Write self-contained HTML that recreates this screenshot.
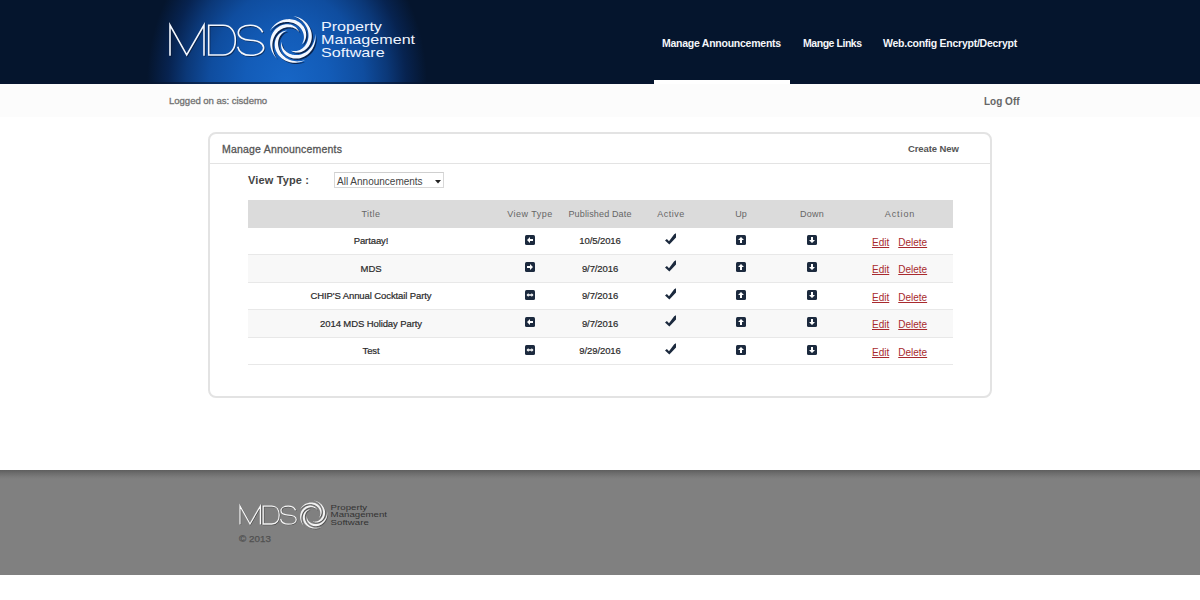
<!DOCTYPE html>
<html><head><meta charset="utf-8">
<style>
*{margin:0;padding:0;box-sizing:border-box}
html,body{width:1200px;height:600px;overflow:hidden;background:#fff;font-family:"Liberation Sans",sans-serif}
.abs{position:absolute}
#hdr{position:absolute;left:0;top:0;width:1200px;height:84px;background:#05152d}
#glow{position:absolute;left:0;top:0;width:1200px;height:84px;
  background:radial-gradient(ellipse 140px 170px at 287px 84px, #1766c6 0%, #135cb8 30%, #0f4d9f 55%, #0b3878 72%, #072350 85%, #05152d 100%)}
.mds{position:absolute;color:#fff}
.pms{transform:scaleX(1.24);transform-origin:0 0;white-space:nowrap}
.nav{position:absolute;top:37px;color:#f4f6fa;font-size:10.5px;font-weight:700;letter-spacing:-0.25px;white-space:nowrap}
#ul{position:absolute;left:654px;top:80px;width:136px;height:4px;background:#fff}
#sub{position:absolute;left:0;top:84px;width:1200px;height:33px;background:#fcfcfc}
#logged{position:absolute;left:169px;top:95px;font-size:9.6px;color:#737373;letter-spacing:-0.05px;-webkit-text-stroke:0.3px #737373;white-space:nowrap}
#logoff{position:absolute;left:984px;top:96px;font-size:10px;font-weight:700;color:#666;white-space:nowrap}
#panel{position:absolute;left:208px;top:132px;width:784px;height:266px;border:2px solid #e3e3e3;border-radius:8px;background:#fff}
#ptitle{position:absolute;left:222px;top:143px;font-size:10.5px;color:#555;white-space:nowrap;letter-spacing:0.2px;-webkit-text-stroke:0.3px #555}
#pcreate{position:absolute;left:908px;top:143px;font-size:9.5px;font-weight:700;color:#555;letter-spacing:-0.1px;white-space:nowrap}
#pdiv{position:absolute;left:210px;top:163px;width:780px;height:1px;background:#e3e3e3}
#vtl{position:absolute;left:248px;top:174px;font-size:11px;font-weight:700;color:#444;letter-spacing:0.15px;white-space:nowrap}
#sel{position:absolute;left:334px;top:172px;width:110px;height:15.5px;border:1px solid #d8d8d8;border-top-color:#cfcfcf;background:#fff}
#selt{position:absolute;left:337px;top:176px;font-size:10px;color:#444;white-space:nowrap}
#tbl{position:absolute;left:248px;top:0;width:705px}
#th{position:absolute;left:248px;top:200px;width:705px;height:28px;background:#dbdbdb}
.hc{position:absolute;top:209px;font-size:9px;color:#666;white-space:nowrap;text-align:center}
.row{position:absolute;left:248px;width:705px}
.rb{position:absolute;left:248px;width:705px;height:1px;background:#e8e8e8}
.cell{position:absolute;top:0;height:100%;display:flex;align-items:center;justify-content:center;font-size:9.5px;color:#2a2a2a;white-space:nowrap;letter-spacing:-0.1px;-webkit-text-stroke:0.2px #2a2a2a;padding-bottom:1px}
.ico{position:absolute;line-height:0}
.cell a{color:#a82a2e;text-decoration:underline;letter-spacing:0;-webkit-text-stroke:0;font-size:10px}
#ftr{position:absolute;left:0;top:470px;width:1200px;height:105px;background:#808080;
  background:linear-gradient(#5e5e5e 0px,#6c6c6c 3px,#7b7b7b 7px,#808080 9px,#808080 100%)}
#copy{position:absolute;left:239px;top:533px;font-size:9.8px;letter-spacing:0.05px;color:#505050;-webkit-text-stroke:0.25px #505050;white-space:nowrap}
</style></head><body>
<div id="hdr"></div><div id="glow"></div><div class="abs" style="left:0;top:82px;width:1200px;height:2px;background:rgba(6,22,48,0.6)"></div>
<div class="abs" style="left:160px;top:10px;width:270px;height:62px;transform:scale(1);transform-origin:0 0">
<svg class="abs" style="left:0;top:0" width="140" height="60" viewBox="160 10 140 60">
<g fill="none" stroke="#06122a" stroke-opacity="0.6" stroke-width="1.7000000000000002" transform="translate(0.8,0.8)"><path d="M170,55.7 L170,25 L186.7,55 L204,25 L204,55.7"/>
<path d="M208.7,25.3 L223,25.3 C231,25.3 235.3,31.5 235.3,40.15 C235.3,48.8 231,55 223,55 L208.7,55 Z"/>
<path d="M262.7,32.3 C260.5,27.5 256,25.3 250.3,25.3 C243,25.3 238.3,28.5 238.3,32.7 C238.3,37 243,40 250.3,40.2 C258.5,40.4 263.7,43.5 263.7,47.8 C263.7,52 258.5,55.3 250.5,55.3 C243.5,55.3 239,52 237.7,46.7"/></g>
<g fill="none" stroke="#f4f8ff" stroke-width="1.6"><path d="M170,55.7 L170,25 L186.7,55 L204,25 L204,55.7"/>
<path d="M208.7,25.3 L223,25.3 C231,25.3 235.3,31.5 235.3,40.15 C235.3,48.8 231,55 223,55 L208.7,55 Z"/>
<path d="M262.7,32.3 C260.5,27.5 256,25.3 250.3,25.3 C243,25.3 238.3,28.5 238.3,32.7 C238.3,37 243,40 250.3,40.2 C258.5,40.4 263.7,43.5 263.7,47.8 C263.7,52 258.5,55.3 250.5,55.3 C243.5,55.3 239,52 237.7,46.7"/></g></svg>
<div class="abs" style="left:107px;top:5px;line-height:0"><svg width="50" height="50" viewBox="0 0 100 100"><g fill="#081a3c" opacity="0.85" transform="translate(2.6,2.6)"><path d="M5.19,32.80 L6.74,29.96 L8.47,27.26 L10.38,24.70 L12.43,22.29 L14.64,20.04 L16.98,17.97 L19.44,16.08 L22.01,14.38 L24.67,12.88 L27.41,11.58 L30.21,10.49 L33.06,9.61 L35.95,8.94 L38.85,8.49 L41.74,8.25 L44.62,8.23 L47.47,8.41 L50.27,8.80 L53.00,9.39 L55.66,10.17 L58.22,11.14 L60.67,12.29 L63.00,13.60 L65.19,15.06 L67.24,16.67 L69.14,18.40 L70.88,20.25 L72.44,22.20 L73.83,24.24 L75.04,26.34 L76.07,28.50 L76.91,30.69 L77.56,32.90 L78.03,35.12 L78.31,37.33 L78.42,39.51 L78.36,41.66 L78.13,43.74 L77.74,45.76 L77.20,47.70 L76.53,49.55 L75.72,51.29 L74.80,52.93 L73.77,54.44 L72.65,55.83 L71.45,57.09 L70.19,58.22 L68.87,59.21 L68.87,59.21 L69.75,58.04 L70.56,56.80 L71.29,55.48 L71.94,54.10 L72.50,52.65 L72.97,51.15 L73.34,49.60 L73.62,48.00 L73.79,46.37 L73.85,44.69 L73.80,43.00 L73.65,41.28 L73.37,39.54 L72.98,37.80 L72.47,36.06 L71.84,34.33 L71.09,32.61 L70.21,30.91 L69.20,29.24 L68.07,27.61 L66.82,26.03 L65.44,24.51 L63.94,23.05 L62.32,21.66 L60.58,20.36 L58.72,19.15 L56.75,18.05 L54.68,17.06 L52.50,16.19 L50.23,15.45 L47.86,14.86 L45.42,14.41 L42.90,14.13 L40.33,14.01 L37.70,14.07 L35.03,14.31 L32.34,14.74 L29.63,15.36 L26.92,16.19 L24.23,17.21 L21.57,18.45 L18.96,19.89 L16.40,21.54 L13.93,23.39 L11.56,25.45 L9.30,27.71 L7.17,30.16 L5.19,32.80Z"/><path d="M52.51,2.07 L55.69,2.67 L58.80,3.48 L61.82,4.50 L64.75,5.71 L67.56,7.11 L70.26,8.70 L72.81,10.45 L75.22,12.37 L77.47,14.44 L79.55,16.64 L81.46,18.97 L83.18,21.41 L84.70,23.95 L86.03,26.56 L87.15,29.25 L88.07,31.98 L88.77,34.74 L89.27,37.52 L89.55,40.31 L89.63,43.07 L89.50,45.81 L89.17,48.49 L88.64,51.11 L87.92,53.65 L87.03,56.10 L85.97,58.44 L84.74,60.66 L83.37,62.76 L81.87,64.71 L80.24,66.50 L78.51,68.15 L76.68,69.62 L74.78,70.93 L72.81,72.06 L70.80,73.01 L68.76,73.79 L66.70,74.39 L64.64,74.82 L62.60,75.07 L60.59,75.16 L58.63,75.09 L56.72,74.86 L54.88,74.49 L53.12,73.98 L51.45,73.34 L49.88,72.59 L48.42,71.74 L47.08,70.80 L47.08,70.80 L48.46,71.27 L49.89,71.65 L51.37,71.94 L52.88,72.13 L54.43,72.22 L56.00,72.20 L57.59,72.08 L59.20,71.84 L60.81,71.50 L62.42,71.04 L64.02,70.48 L65.60,69.79 L67.17,69.00 L68.70,68.09 L70.20,67.06 L71.66,65.93 L73.06,64.68 L74.40,63.32 L75.68,61.85 L76.88,60.27 L77.99,58.59 L79.02,56.81 L79.94,54.93 L80.76,52.96 L81.46,50.90 L82.03,48.76 L82.47,46.55 L82.78,44.27 L82.93,41.93 L82.93,39.54 L82.76,37.11 L82.43,34.65 L81.93,32.17 L81.24,29.68 L80.37,27.20 L79.32,24.74 L78.08,22.31 L76.65,19.92 L75.03,17.60 L73.22,15.36 L71.22,13.21 L69.04,11.17 L66.69,9.25 L64.16,7.48 L61.47,5.86 L58.62,4.40 L55.63,3.14 L52.51,2.07Z"/><path d="M96.36,37.58 L96.77,40.78 L96.96,43.99 L96.93,47.18 L96.68,50.34 L96.22,53.45 L95.54,56.50 L94.66,59.48 L93.58,62.36 L92.31,65.14 L90.86,67.80 L89.23,70.33 L87.44,72.72 L85.50,74.95 L83.42,77.02 L81.22,78.92 L78.90,80.64 L76.49,82.16 L74.00,83.49 L71.44,84.62 L68.83,85.55 L66.19,86.27 L63.54,86.78 L60.88,87.09 L58.25,87.20 L55.64,87.10 L53.09,86.82 L50.59,86.34 L48.18,85.68 L45.86,84.85 L43.65,83.86 L41.55,82.72 L39.58,81.44 L37.75,80.03 L36.07,78.51 L34.54,76.89 L33.17,75.19 L31.96,73.42 L30.92,71.60 L30.05,69.73 L29.34,67.85 L28.81,65.96 L28.43,64.07 L28.22,62.21 L28.16,60.38 L28.25,58.60 L28.48,56.87 L28.84,55.22 L29.32,53.65 L29.32,53.65 L29.29,55.11 L29.37,56.59 L29.55,58.08 L29.84,59.58 L30.24,61.08 L30.74,62.57 L31.35,64.04 L32.07,65.50 L32.89,66.92 L33.82,68.31 L34.86,69.66 L36.00,70.96 L37.24,72.20 L38.58,73.38 L40.01,74.49 L41.54,75.52 L43.17,76.47 L44.87,77.32 L46.67,78.08 L48.54,78.74 L50.48,79.28 L52.49,79.70 L54.56,80.00 L56.69,80.17 L58.86,80.20 L61.07,80.08 L63.32,79.82 L65.58,79.40 L67.85,78.82 L70.12,78.08 L72.39,77.18 L74.62,76.10 L76.83,74.85 L78.98,73.43 L81.07,71.84 L83.09,70.08 L85.02,68.15 L86.84,66.05 L88.54,63.79 L90.12,61.38 L91.55,58.81 L92.81,56.11 L93.91,53.28 L94.82,50.33 L95.53,47.27 L96.03,44.11 L96.31,40.88 L96.36,37.58Z"/><path d="M76.14,90.26 L73.22,91.64 L70.23,92.81 L67.18,93.76 L64.10,94.50 L61.00,95.02 L57.89,95.32 L54.79,95.40 L51.71,95.27 L48.68,94.92 L45.70,94.36 L42.79,93.59 L39.96,92.63 L37.24,91.47 L34.63,90.14 L32.14,88.63 L29.80,86.96 L27.60,85.13 L25.57,83.17 L23.70,81.09 L22.01,78.90 L20.51,76.61 L19.20,74.24 L18.09,71.81 L17.17,69.34 L16.46,66.83 L15.94,64.31 L15.62,61.79 L15.50,59.30 L15.58,56.83 L15.83,54.42 L16.27,52.08 L16.88,49.81 L17.66,47.63 L18.58,45.56 L19.65,43.61 L20.84,41.78 L22.15,40.08 L23.57,38.53 L25.07,37.12 L26.64,35.87 L28.27,34.78 L29.95,33.84 L31.66,33.06 L33.38,32.43 L35.10,31.97 L36.81,31.65 L38.50,31.48 L40.14,31.46 L40.14,31.46 L38.74,31.88 L37.36,32.42 L36.00,33.05 L34.66,33.79 L33.36,34.63 L32.10,35.57 L30.88,36.60 L29.72,37.73 L28.62,38.96 L27.59,40.27 L26.62,41.67 L25.74,43.16 L24.94,44.72 L24.24,46.36 L23.63,48.07 L23.12,49.84 L22.72,51.68 L22.43,53.57 L22.26,55.51 L22.22,57.49 L22.30,59.50 L22.52,61.55 L22.88,63.61 L23.38,65.68 L24.02,67.76 L24.81,69.83 L25.76,71.88 L26.85,73.90 L28.10,75.88 L29.51,77.82 L31.07,79.69 L32.79,81.48 L34.65,83.19 L36.67,84.80 L38.83,86.30 L41.13,87.67 L43.56,88.91 L46.12,90.00 L48.79,90.92 L51.58,91.67 L54.45,92.24 L57.42,92.61 L60.45,92.77 L63.54,92.72 L66.67,92.45 L69.83,91.96 L72.99,91.23 L76.14,90.26Z"/><path d="M19.79,87.30 L17.58,84.95 L15.54,82.46 L13.69,79.87 L12.04,77.16 L10.58,74.37 L9.34,71.51 L8.30,68.58 L7.48,65.62 L6.87,62.62 L6.48,59.61 L6.31,56.61 L6.35,53.63 L6.61,50.68 L7.08,47.78 L7.74,44.95 L8.61,42.20 L9.66,39.55 L10.90,37.01 L12.31,34.59 L13.87,32.31 L15.58,30.18 L17.43,28.20 L19.39,26.39 L21.46,24.75 L23.63,23.30 L25.86,22.03 L28.16,20.95 L30.50,20.06 L32.86,19.37 L35.24,18.87 L37.60,18.56 L39.95,18.44 L42.26,18.51 L44.51,18.75 L46.70,19.16 L48.81,19.73 L50.83,20.45 L52.74,21.31 L54.54,22.31 L56.22,23.42 L57.77,24.63 L59.18,25.94 L60.45,27.32 L61.57,28.77 L62.55,30.26 L63.37,31.79 L64.05,33.34 L64.59,34.89 L64.59,34.89 L63.75,33.70 L62.82,32.55 L61.79,31.45 L60.68,30.40 L59.48,29.42 L58.19,28.51 L56.83,27.68 L55.40,26.92 L53.89,26.25 L52.32,25.68 L50.69,25.20 L49.01,24.82 L47.28,24.54 L45.50,24.37 L43.69,24.32 L41.84,24.39 L39.97,24.57 L38.09,24.88 L36.19,25.32 L34.29,25.89 L32.40,26.60 L30.53,27.43 L28.68,28.41 L26.86,29.53 L25.08,30.78 L23.36,32.17 L21.70,33.70 L20.12,35.37 L18.62,37.17 L17.21,39.11 L15.92,41.17 L14.74,43.36 L13.69,45.66 L12.78,48.08 L12.02,50.59 L11.43,53.21 L11.01,55.90 L10.76,58.67 L10.71,61.50 L10.86,64.38 L11.21,67.29 L11.77,70.22 L12.55,73.16 L13.55,76.08 L14.77,78.97 L16.22,81.82 L17.90,84.60 L19.79,87.30Z"/></g><g fill="#f4f8ff"><path d="M5.19,32.80 L6.74,29.96 L8.47,27.26 L10.38,24.70 L12.43,22.29 L14.64,20.04 L16.98,17.97 L19.44,16.08 L22.01,14.38 L24.67,12.88 L27.41,11.58 L30.21,10.49 L33.06,9.61 L35.95,8.94 L38.85,8.49 L41.74,8.25 L44.62,8.23 L47.47,8.41 L50.27,8.80 L53.00,9.39 L55.66,10.17 L58.22,11.14 L60.67,12.29 L63.00,13.60 L65.19,15.06 L67.24,16.67 L69.14,18.40 L70.88,20.25 L72.44,22.20 L73.83,24.24 L75.04,26.34 L76.07,28.50 L76.91,30.69 L77.56,32.90 L78.03,35.12 L78.31,37.33 L78.42,39.51 L78.36,41.66 L78.13,43.74 L77.74,45.76 L77.20,47.70 L76.53,49.55 L75.72,51.29 L74.80,52.93 L73.77,54.44 L72.65,55.83 L71.45,57.09 L70.19,58.22 L68.87,59.21 L68.87,59.21 L69.75,58.04 L70.56,56.80 L71.29,55.48 L71.94,54.10 L72.50,52.65 L72.97,51.15 L73.34,49.60 L73.62,48.00 L73.79,46.37 L73.85,44.69 L73.80,43.00 L73.65,41.28 L73.37,39.54 L72.98,37.80 L72.47,36.06 L71.84,34.33 L71.09,32.61 L70.21,30.91 L69.20,29.24 L68.07,27.61 L66.82,26.03 L65.44,24.51 L63.94,23.05 L62.32,21.66 L60.58,20.36 L58.72,19.15 L56.75,18.05 L54.68,17.06 L52.50,16.19 L50.23,15.45 L47.86,14.86 L45.42,14.41 L42.90,14.13 L40.33,14.01 L37.70,14.07 L35.03,14.31 L32.34,14.74 L29.63,15.36 L26.92,16.19 L24.23,17.21 L21.57,18.45 L18.96,19.89 L16.40,21.54 L13.93,23.39 L11.56,25.45 L9.30,27.71 L7.17,30.16 L5.19,32.80Z"/><path d="M52.51,2.07 L55.69,2.67 L58.80,3.48 L61.82,4.50 L64.75,5.71 L67.56,7.11 L70.26,8.70 L72.81,10.45 L75.22,12.37 L77.47,14.44 L79.55,16.64 L81.46,18.97 L83.18,21.41 L84.70,23.95 L86.03,26.56 L87.15,29.25 L88.07,31.98 L88.77,34.74 L89.27,37.52 L89.55,40.31 L89.63,43.07 L89.50,45.81 L89.17,48.49 L88.64,51.11 L87.92,53.65 L87.03,56.10 L85.97,58.44 L84.74,60.66 L83.37,62.76 L81.87,64.71 L80.24,66.50 L78.51,68.15 L76.68,69.62 L74.78,70.93 L72.81,72.06 L70.80,73.01 L68.76,73.79 L66.70,74.39 L64.64,74.82 L62.60,75.07 L60.59,75.16 L58.63,75.09 L56.72,74.86 L54.88,74.49 L53.12,73.98 L51.45,73.34 L49.88,72.59 L48.42,71.74 L47.08,70.80 L47.08,70.80 L48.46,71.27 L49.89,71.65 L51.37,71.94 L52.88,72.13 L54.43,72.22 L56.00,72.20 L57.59,72.08 L59.20,71.84 L60.81,71.50 L62.42,71.04 L64.02,70.48 L65.60,69.79 L67.17,69.00 L68.70,68.09 L70.20,67.06 L71.66,65.93 L73.06,64.68 L74.40,63.32 L75.68,61.85 L76.88,60.27 L77.99,58.59 L79.02,56.81 L79.94,54.93 L80.76,52.96 L81.46,50.90 L82.03,48.76 L82.47,46.55 L82.78,44.27 L82.93,41.93 L82.93,39.54 L82.76,37.11 L82.43,34.65 L81.93,32.17 L81.24,29.68 L80.37,27.20 L79.32,24.74 L78.08,22.31 L76.65,19.92 L75.03,17.60 L73.22,15.36 L71.22,13.21 L69.04,11.17 L66.69,9.25 L64.16,7.48 L61.47,5.86 L58.62,4.40 L55.63,3.14 L52.51,2.07Z"/><path d="M96.36,37.58 L96.77,40.78 L96.96,43.99 L96.93,47.18 L96.68,50.34 L96.22,53.45 L95.54,56.50 L94.66,59.48 L93.58,62.36 L92.31,65.14 L90.86,67.80 L89.23,70.33 L87.44,72.72 L85.50,74.95 L83.42,77.02 L81.22,78.92 L78.90,80.64 L76.49,82.16 L74.00,83.49 L71.44,84.62 L68.83,85.55 L66.19,86.27 L63.54,86.78 L60.88,87.09 L58.25,87.20 L55.64,87.10 L53.09,86.82 L50.59,86.34 L48.18,85.68 L45.86,84.85 L43.65,83.86 L41.55,82.72 L39.58,81.44 L37.75,80.03 L36.07,78.51 L34.54,76.89 L33.17,75.19 L31.96,73.42 L30.92,71.60 L30.05,69.73 L29.34,67.85 L28.81,65.96 L28.43,64.07 L28.22,62.21 L28.16,60.38 L28.25,58.60 L28.48,56.87 L28.84,55.22 L29.32,53.65 L29.32,53.65 L29.29,55.11 L29.37,56.59 L29.55,58.08 L29.84,59.58 L30.24,61.08 L30.74,62.57 L31.35,64.04 L32.07,65.50 L32.89,66.92 L33.82,68.31 L34.86,69.66 L36.00,70.96 L37.24,72.20 L38.58,73.38 L40.01,74.49 L41.54,75.52 L43.17,76.47 L44.87,77.32 L46.67,78.08 L48.54,78.74 L50.48,79.28 L52.49,79.70 L54.56,80.00 L56.69,80.17 L58.86,80.20 L61.07,80.08 L63.32,79.82 L65.58,79.40 L67.85,78.82 L70.12,78.08 L72.39,77.18 L74.62,76.10 L76.83,74.85 L78.98,73.43 L81.07,71.84 L83.09,70.08 L85.02,68.15 L86.84,66.05 L88.54,63.79 L90.12,61.38 L91.55,58.81 L92.81,56.11 L93.91,53.28 L94.82,50.33 L95.53,47.27 L96.03,44.11 L96.31,40.88 L96.36,37.58Z"/><path d="M76.14,90.26 L73.22,91.64 L70.23,92.81 L67.18,93.76 L64.10,94.50 L61.00,95.02 L57.89,95.32 L54.79,95.40 L51.71,95.27 L48.68,94.92 L45.70,94.36 L42.79,93.59 L39.96,92.63 L37.24,91.47 L34.63,90.14 L32.14,88.63 L29.80,86.96 L27.60,85.13 L25.57,83.17 L23.70,81.09 L22.01,78.90 L20.51,76.61 L19.20,74.24 L18.09,71.81 L17.17,69.34 L16.46,66.83 L15.94,64.31 L15.62,61.79 L15.50,59.30 L15.58,56.83 L15.83,54.42 L16.27,52.08 L16.88,49.81 L17.66,47.63 L18.58,45.56 L19.65,43.61 L20.84,41.78 L22.15,40.08 L23.57,38.53 L25.07,37.12 L26.64,35.87 L28.27,34.78 L29.95,33.84 L31.66,33.06 L33.38,32.43 L35.10,31.97 L36.81,31.65 L38.50,31.48 L40.14,31.46 L40.14,31.46 L38.74,31.88 L37.36,32.42 L36.00,33.05 L34.66,33.79 L33.36,34.63 L32.10,35.57 L30.88,36.60 L29.72,37.73 L28.62,38.96 L27.59,40.27 L26.62,41.67 L25.74,43.16 L24.94,44.72 L24.24,46.36 L23.63,48.07 L23.12,49.84 L22.72,51.68 L22.43,53.57 L22.26,55.51 L22.22,57.49 L22.30,59.50 L22.52,61.55 L22.88,63.61 L23.38,65.68 L24.02,67.76 L24.81,69.83 L25.76,71.88 L26.85,73.90 L28.10,75.88 L29.51,77.82 L31.07,79.69 L32.79,81.48 L34.65,83.19 L36.67,84.80 L38.83,86.30 L41.13,87.67 L43.56,88.91 L46.12,90.00 L48.79,90.92 L51.58,91.67 L54.45,92.24 L57.42,92.61 L60.45,92.77 L63.54,92.72 L66.67,92.45 L69.83,91.96 L72.99,91.23 L76.14,90.26Z"/><path d="M19.79,87.30 L17.58,84.95 L15.54,82.46 L13.69,79.87 L12.04,77.16 L10.58,74.37 L9.34,71.51 L8.30,68.58 L7.48,65.62 L6.87,62.62 L6.48,59.61 L6.31,56.61 L6.35,53.63 L6.61,50.68 L7.08,47.78 L7.74,44.95 L8.61,42.20 L9.66,39.55 L10.90,37.01 L12.31,34.59 L13.87,32.31 L15.58,30.18 L17.43,28.20 L19.39,26.39 L21.46,24.75 L23.63,23.30 L25.86,22.03 L28.16,20.95 L30.50,20.06 L32.86,19.37 L35.24,18.87 L37.60,18.56 L39.95,18.44 L42.26,18.51 L44.51,18.75 L46.70,19.16 L48.81,19.73 L50.83,20.45 L52.74,21.31 L54.54,22.31 L56.22,23.42 L57.77,24.63 L59.18,25.94 L60.45,27.32 L61.57,28.77 L62.55,30.26 L63.37,31.79 L64.05,33.34 L64.59,34.89 L64.59,34.89 L63.75,33.70 L62.82,32.55 L61.79,31.45 L60.68,30.40 L59.48,29.42 L58.19,28.51 L56.83,27.68 L55.40,26.92 L53.89,26.25 L52.32,25.68 L50.69,25.20 L49.01,24.82 L47.28,24.54 L45.50,24.37 L43.69,24.32 L41.84,24.39 L39.97,24.57 L38.09,24.88 L36.19,25.32 L34.29,25.89 L32.40,26.60 L30.53,27.43 L28.68,28.41 L26.86,29.53 L25.08,30.78 L23.36,32.17 L21.70,33.70 L20.12,35.37 L18.62,37.17 L17.21,39.11 L15.92,41.17 L14.74,43.36 L13.69,45.66 L12.78,48.08 L12.02,50.59 L11.43,53.21 L11.01,55.90 L10.76,58.67 L10.71,61.50 L10.86,64.38 L11.21,67.29 L11.77,70.22 L12.55,73.16 L13.55,76.08 L14.77,78.97 L16.22,81.82 L17.90,84.60 L19.79,87.30Z"/></g></svg></div>
<div class="abs pms" style="left:161px;top:10px;color:#eef4ff;font-size:13px;line-height:13px;text-shadow:none">Property<br>Management<br>Software</div>
</div>
<div class="nav" style="left:662px">Manage Announcements</div>
<div class="nav" style="left:803px;letter-spacing:-0.45px">Mange Links</div>
<div class="nav" style="left:883px">Web.config Encrypt/Decrypt</div>
<div id="ul"></div>
<div id="sub"></div>
<div id="logged">Logged on as: cisdemo</div>
<div id="logoff">Log Off</div>

<div id="panel"></div>
<div id="ptitle">Manage Announcements</div>
<div id="pcreate">Create New</div>
<div id="pdiv"></div>
<div id="vtl">View Type :</div>
<div id="sel"></div>
<div id="selt">All Announcements</div>
<svg class="abs" style="left:434.5px;top:179.5px" width="6" height="4"><path d="M0,0 L6,0 L3,3.4 Z" fill="#222"/></svg>

<div id="th"></div>
<div class="hc" style="left:248px;width:246px;letter-spacing:0.5px">Title</div>
<div class="hc" style="left:500px;width:60px;letter-spacing:0.5px">View Type</div>
<div class="hc" style="left:560px;width:80px;letter-spacing:0.15px">Published Date</div>
<div class="hc" style="left:641px;width:60px;letter-spacing:0.5px">Active</div>
<div class="hc" style="left:711px;width:60px">Up</div>
<div class="hc" style="left:782px;width:60px;letter-spacing:0.3px">Down</div>
<div class="hc" style="left:870px;width:60px;letter-spacing:0.9px">Action</div>
<div class="row" style="top:228px;height:26px;background:#fff">
  <div class="cell t" style="left:0;width:246px">Partaay!</div>
  <div class="ico" style="left:277px;top:7px"><svg width="10" height="10" viewBox="0 0 10 10"><rect x="0" y="0" width="10" height="10" rx="1.5" fill="#1c2a3e"/><path d="M2,5 L5,2 L5,4 L8,4 L8,6 L5,6 L5,8 Z" fill="#fff"/></svg></div>
  <div class="cell d" style="left:310px;width:84px">10/5/2016</div>
  <div class="ico" style="left:416px;top:4px"><svg width="14" height="14" viewBox="0 0 14 14"><path d="M1,8.4 L2.9,7 L5,9.3 L10.2,2.2 L12,1.2 L12,5.4 L5.4,12.4 Z" fill="#1c2a3e"/></svg></div>
  <div class="ico" style="left:488px;top:7px"><svg width="10" height="10" viewBox="0 0 10 10"><rect width="10" height="10" rx="1.5" fill="#1c2a3e"/><path d="M5,2 L8,5 L6,5 L6,8 L4,8 L4,5 L2,5 Z" fill="#fff"/></svg></div>
  <div class="ico" style="left:559px;top:7px"><svg width="10" height="10" viewBox="0 0 10 10"><rect width="10" height="10" rx="1.5" fill="#1c2a3e"/><path d="M5,8 L8,5 L6,5 L6,2 L4,2 L4,5 L2,5 Z" fill="#fff"/></svg></div>
  <div class="cell a" style="left:624px;padding-bottom:0;top:1px"><a>Edit</a><a style="margin-left:9px">Delete</a></div>
</div>
<div class="rb" style="top:254px"></div>
<div class="row" style="top:255px;height:27px;background:#f8f8f8">
  <div class="cell t" style="left:0;width:246px">MDS</div>
  <div class="ico" style="left:277px;top:7px"><svg width="10" height="10" viewBox="0 0 10 10"><rect x="0" y="0" width="10" height="10" rx="1.5" fill="#1c2a3e"/><path d="M8,5 L5,2 L5,4 L2,4 L2,6 L5,6 L5,8 Z" fill="#fff"/></svg></div>
  <div class="cell d" style="left:310px;width:84px">9/7/2016</div>
  <div class="ico" style="left:416px;top:4px"><svg width="14" height="14" viewBox="0 0 14 14"><path d="M1,8.4 L2.9,7 L5,9.3 L10.2,2.2 L12,1.2 L12,5.4 L5.4,12.4 Z" fill="#1c2a3e"/></svg></div>
  <div class="ico" style="left:488px;top:7px"><svg width="10" height="10" viewBox="0 0 10 10"><rect width="10" height="10" rx="1.5" fill="#1c2a3e"/><path d="M5,2 L8,5 L6,5 L6,8 L4,8 L4,5 L2,5 Z" fill="#fff"/></svg></div>
  <div class="ico" style="left:559px;top:7px"><svg width="10" height="10" viewBox="0 0 10 10"><rect width="10" height="10" rx="1.5" fill="#1c2a3e"/><path d="M5,8 L8,5 L6,5 L6,2 L4,2 L4,5 L2,5 Z" fill="#fff"/></svg></div>
  <div class="cell a" style="left:624px;padding-bottom:0;top:1px"><a>Edit</a><a style="margin-left:9px">Delete</a></div>
</div>
<div class="rb" style="top:282px"></div>
<div class="row" style="top:283px;height:26px;background:#fff">
  <div class="cell t" style="left:0;width:246px">CHIP'S Annual Cocktail Party</div>
  <div class="ico" style="left:277px;top:7px"><svg width="10" height="10" viewBox="0 0 10 10"><rect x="0" y="0" width="10" height="10" rx="1.5" fill="#1c2a3e"/><path d="M1.5,5 L3.5,3 L3.5,4.2 L6.5,4.2 L6.5,3 L8.5,5 L6.5,7 L6.5,5.8 L3.5,5.8 L3.5,7 Z" fill="#fff"/></svg></div>
  <div class="cell d" style="left:310px;width:84px">9/7/2016</div>
  <div class="ico" style="left:416px;top:4px"><svg width="14" height="14" viewBox="0 0 14 14"><path d="M1,8.4 L2.9,7 L5,9.3 L10.2,2.2 L12,1.2 L12,5.4 L5.4,12.4 Z" fill="#1c2a3e"/></svg></div>
  <div class="ico" style="left:488px;top:7px"><svg width="10" height="10" viewBox="0 0 10 10"><rect width="10" height="10" rx="1.5" fill="#1c2a3e"/><path d="M5,2 L8,5 L6,5 L6,8 L4,8 L4,5 L2,5 Z" fill="#fff"/></svg></div>
  <div class="ico" style="left:559px;top:7px"><svg width="10" height="10" viewBox="0 0 10 10"><rect width="10" height="10" rx="1.5" fill="#1c2a3e"/><path d="M5,8 L8,5 L6,5 L6,2 L4,2 L4,5 L2,5 Z" fill="#fff"/></svg></div>
  <div class="cell a" style="left:624px;padding-bottom:0;top:1px"><a>Edit</a><a style="margin-left:9px">Delete</a></div>
</div>
<div class="rb" style="top:309px"></div>
<div class="row" style="top:310px;height:27px;background:#f8f8f8">
  <div class="cell t" style="left:0;width:246px">2014 MDS Holiday Party</div>
  <div class="ico" style="left:277px;top:7px"><svg width="10" height="10" viewBox="0 0 10 10"><rect x="0" y="0" width="10" height="10" rx="1.5" fill="#1c2a3e"/><path d="M2,5 L5,2 L5,4 L8,4 L8,6 L5,6 L5,8 Z" fill="#fff"/></svg></div>
  <div class="cell d" style="left:310px;width:84px">9/7/2016</div>
  <div class="ico" style="left:416px;top:4px"><svg width="14" height="14" viewBox="0 0 14 14"><path d="M1,8.4 L2.9,7 L5,9.3 L10.2,2.2 L12,1.2 L12,5.4 L5.4,12.4 Z" fill="#1c2a3e"/></svg></div>
  <div class="ico" style="left:488px;top:7px"><svg width="10" height="10" viewBox="0 0 10 10"><rect width="10" height="10" rx="1.5" fill="#1c2a3e"/><path d="M5,2 L8,5 L6,5 L6,8 L4,8 L4,5 L2,5 Z" fill="#fff"/></svg></div>
  <div class="ico" style="left:559px;top:7px"><svg width="10" height="10" viewBox="0 0 10 10"><rect width="10" height="10" rx="1.5" fill="#1c2a3e"/><path d="M5,8 L8,5 L6,5 L6,2 L4,2 L4,5 L2,5 Z" fill="#fff"/></svg></div>
  <div class="cell a" style="left:624px;padding-bottom:0;top:1px"><a>Edit</a><a style="margin-left:9px">Delete</a></div>
</div>
<div class="rb" style="top:337px"></div>
<div class="row" style="top:338px;height:26px;background:#fff">
  <div class="cell t" style="left:0;width:246px">Test</div>
  <div class="ico" style="left:277px;top:7px"><svg width="10" height="10" viewBox="0 0 10 10"><rect x="0" y="0" width="10" height="10" rx="1.5" fill="#1c2a3e"/><path d="M1.5,5 L3.5,3 L3.5,4.2 L6.5,4.2 L6.5,3 L8.5,5 L6.5,7 L6.5,5.8 L3.5,5.8 L3.5,7 Z" fill="#fff"/></svg></div>
  <div class="cell d" style="left:310px;width:84px">9/29/2016</div>
  <div class="ico" style="left:416px;top:4px"><svg width="14" height="14" viewBox="0 0 14 14"><path d="M1,8.4 L2.9,7 L5,9.3 L10.2,2.2 L12,1.2 L12,5.4 L5.4,12.4 Z" fill="#1c2a3e"/></svg></div>
  <div class="ico" style="left:488px;top:7px"><svg width="10" height="10" viewBox="0 0 10 10"><rect width="10" height="10" rx="1.5" fill="#1c2a3e"/><path d="M5,2 L8,5 L6,5 L6,8 L4,8 L4,5 L2,5 Z" fill="#fff"/></svg></div>
  <div class="ico" style="left:559px;top:7px"><svg width="10" height="10" viewBox="0 0 10 10"><rect width="10" height="10" rx="1.5" fill="#1c2a3e"/><path d="M5,8 L8,5 L6,5 L6,2 L4,2 L4,5 L2,5 Z" fill="#fff"/></svg></div>
  <div class="cell a" style="left:624px;padding-bottom:0;top:1px"><a>Edit</a><a style="margin-left:9px">Delete</a></div>
</div>
<div class="rb" style="top:364px"></div>


<div id="ftr"></div>
<div class="abs" style="left:233.7px;top:496.8px;width:270px;height:62px;transform:scale(0.6);transform-origin:0 0">
<svg class="abs" style="left:0;top:0" width="140" height="60" viewBox="160 10 140 60">
<g fill="none" stroke="#333" stroke-opacity="0.8" stroke-width="2.2" transform="translate(0.8,0.8)"><path d="M170,55.7 L170,25 L186.7,55 L204,25 L204,55.7"/>
<path d="M208.7,25.3 L223,25.3 C231,25.3 235.3,31.5 235.3,40.15 C235.3,48.8 231,55 223,55 L208.7,55 Z"/>
<path d="M262.7,32.3 C260.5,27.5 256,25.3 250.3,25.3 C243,25.3 238.3,28.5 238.3,32.7 C238.3,37 243,40 250.3,40.2 C258.5,40.4 263.7,43.5 263.7,47.8 C263.7,52 258.5,55.3 250.5,55.3 C243.5,55.3 239,52 237.7,46.7"/></g>
<g fill="none" stroke="#f6f6f6" stroke-width="2.1"><path d="M170,55.7 L170,25 L186.7,55 L204,25 L204,55.7"/>
<path d="M208.7,25.3 L223,25.3 C231,25.3 235.3,31.5 235.3,40.15 C235.3,48.8 231,55 223,55 L208.7,55 Z"/>
<path d="M262.7,32.3 C260.5,27.5 256,25.3 250.3,25.3 C243,25.3 238.3,28.5 238.3,32.7 C238.3,37 243,40 250.3,40.2 C258.5,40.4 263.7,43.5 263.7,47.8 C263.7,52 258.5,55.3 250.5,55.3 C243.5,55.3 239,52 237.7,46.7"/></g></svg>
<div class="abs" style="left:107px;top:5px;line-height:0"><svg width="50" height="50" viewBox="0 0 100 100"><g fill="#444" opacity="0.7" transform="translate(2.6,2.6)"><path d="M5.19,32.80 L6.74,29.96 L8.47,27.26 L10.38,24.70 L12.43,22.29 L14.64,20.04 L16.98,17.97 L19.44,16.08 L22.01,14.38 L24.67,12.88 L27.41,11.58 L30.21,10.49 L33.06,9.61 L35.95,8.94 L38.85,8.49 L41.74,8.25 L44.62,8.23 L47.47,8.41 L50.27,8.80 L53.00,9.39 L55.66,10.17 L58.22,11.14 L60.67,12.29 L63.00,13.60 L65.19,15.06 L67.24,16.67 L69.14,18.40 L70.88,20.25 L72.44,22.20 L73.83,24.24 L75.04,26.34 L76.07,28.50 L76.91,30.69 L77.56,32.90 L78.03,35.12 L78.31,37.33 L78.42,39.51 L78.36,41.66 L78.13,43.74 L77.74,45.76 L77.20,47.70 L76.53,49.55 L75.72,51.29 L74.80,52.93 L73.77,54.44 L72.65,55.83 L71.45,57.09 L70.19,58.22 L68.87,59.21 L68.87,59.21 L69.75,58.04 L70.56,56.80 L71.29,55.48 L71.94,54.10 L72.50,52.65 L72.97,51.15 L73.34,49.60 L73.62,48.00 L73.79,46.37 L73.85,44.69 L73.80,43.00 L73.65,41.28 L73.37,39.54 L72.98,37.80 L72.47,36.06 L71.84,34.33 L71.09,32.61 L70.21,30.91 L69.20,29.24 L68.07,27.61 L66.82,26.03 L65.44,24.51 L63.94,23.05 L62.32,21.66 L60.58,20.36 L58.72,19.15 L56.75,18.05 L54.68,17.06 L52.50,16.19 L50.23,15.45 L47.86,14.86 L45.42,14.41 L42.90,14.13 L40.33,14.01 L37.70,14.07 L35.03,14.31 L32.34,14.74 L29.63,15.36 L26.92,16.19 L24.23,17.21 L21.57,18.45 L18.96,19.89 L16.40,21.54 L13.93,23.39 L11.56,25.45 L9.30,27.71 L7.17,30.16 L5.19,32.80Z"/><path d="M52.51,2.07 L55.69,2.67 L58.80,3.48 L61.82,4.50 L64.75,5.71 L67.56,7.11 L70.26,8.70 L72.81,10.45 L75.22,12.37 L77.47,14.44 L79.55,16.64 L81.46,18.97 L83.18,21.41 L84.70,23.95 L86.03,26.56 L87.15,29.25 L88.07,31.98 L88.77,34.74 L89.27,37.52 L89.55,40.31 L89.63,43.07 L89.50,45.81 L89.17,48.49 L88.64,51.11 L87.92,53.65 L87.03,56.10 L85.97,58.44 L84.74,60.66 L83.37,62.76 L81.87,64.71 L80.24,66.50 L78.51,68.15 L76.68,69.62 L74.78,70.93 L72.81,72.06 L70.80,73.01 L68.76,73.79 L66.70,74.39 L64.64,74.82 L62.60,75.07 L60.59,75.16 L58.63,75.09 L56.72,74.86 L54.88,74.49 L53.12,73.98 L51.45,73.34 L49.88,72.59 L48.42,71.74 L47.08,70.80 L47.08,70.80 L48.46,71.27 L49.89,71.65 L51.37,71.94 L52.88,72.13 L54.43,72.22 L56.00,72.20 L57.59,72.08 L59.20,71.84 L60.81,71.50 L62.42,71.04 L64.02,70.48 L65.60,69.79 L67.17,69.00 L68.70,68.09 L70.20,67.06 L71.66,65.93 L73.06,64.68 L74.40,63.32 L75.68,61.85 L76.88,60.27 L77.99,58.59 L79.02,56.81 L79.94,54.93 L80.76,52.96 L81.46,50.90 L82.03,48.76 L82.47,46.55 L82.78,44.27 L82.93,41.93 L82.93,39.54 L82.76,37.11 L82.43,34.65 L81.93,32.17 L81.24,29.68 L80.37,27.20 L79.32,24.74 L78.08,22.31 L76.65,19.92 L75.03,17.60 L73.22,15.36 L71.22,13.21 L69.04,11.17 L66.69,9.25 L64.16,7.48 L61.47,5.86 L58.62,4.40 L55.63,3.14 L52.51,2.07Z"/><path d="M96.36,37.58 L96.77,40.78 L96.96,43.99 L96.93,47.18 L96.68,50.34 L96.22,53.45 L95.54,56.50 L94.66,59.48 L93.58,62.36 L92.31,65.14 L90.86,67.80 L89.23,70.33 L87.44,72.72 L85.50,74.95 L83.42,77.02 L81.22,78.92 L78.90,80.64 L76.49,82.16 L74.00,83.49 L71.44,84.62 L68.83,85.55 L66.19,86.27 L63.54,86.78 L60.88,87.09 L58.25,87.20 L55.64,87.10 L53.09,86.82 L50.59,86.34 L48.18,85.68 L45.86,84.85 L43.65,83.86 L41.55,82.72 L39.58,81.44 L37.75,80.03 L36.07,78.51 L34.54,76.89 L33.17,75.19 L31.96,73.42 L30.92,71.60 L30.05,69.73 L29.34,67.85 L28.81,65.96 L28.43,64.07 L28.22,62.21 L28.16,60.38 L28.25,58.60 L28.48,56.87 L28.84,55.22 L29.32,53.65 L29.32,53.65 L29.29,55.11 L29.37,56.59 L29.55,58.08 L29.84,59.58 L30.24,61.08 L30.74,62.57 L31.35,64.04 L32.07,65.50 L32.89,66.92 L33.82,68.31 L34.86,69.66 L36.00,70.96 L37.24,72.20 L38.58,73.38 L40.01,74.49 L41.54,75.52 L43.17,76.47 L44.87,77.32 L46.67,78.08 L48.54,78.74 L50.48,79.28 L52.49,79.70 L54.56,80.00 L56.69,80.17 L58.86,80.20 L61.07,80.08 L63.32,79.82 L65.58,79.40 L67.85,78.82 L70.12,78.08 L72.39,77.18 L74.62,76.10 L76.83,74.85 L78.98,73.43 L81.07,71.84 L83.09,70.08 L85.02,68.15 L86.84,66.05 L88.54,63.79 L90.12,61.38 L91.55,58.81 L92.81,56.11 L93.91,53.28 L94.82,50.33 L95.53,47.27 L96.03,44.11 L96.31,40.88 L96.36,37.58Z"/><path d="M76.14,90.26 L73.22,91.64 L70.23,92.81 L67.18,93.76 L64.10,94.50 L61.00,95.02 L57.89,95.32 L54.79,95.40 L51.71,95.27 L48.68,94.92 L45.70,94.36 L42.79,93.59 L39.96,92.63 L37.24,91.47 L34.63,90.14 L32.14,88.63 L29.80,86.96 L27.60,85.13 L25.57,83.17 L23.70,81.09 L22.01,78.90 L20.51,76.61 L19.20,74.24 L18.09,71.81 L17.17,69.34 L16.46,66.83 L15.94,64.31 L15.62,61.79 L15.50,59.30 L15.58,56.83 L15.83,54.42 L16.27,52.08 L16.88,49.81 L17.66,47.63 L18.58,45.56 L19.65,43.61 L20.84,41.78 L22.15,40.08 L23.57,38.53 L25.07,37.12 L26.64,35.87 L28.27,34.78 L29.95,33.84 L31.66,33.06 L33.38,32.43 L35.10,31.97 L36.81,31.65 L38.50,31.48 L40.14,31.46 L40.14,31.46 L38.74,31.88 L37.36,32.42 L36.00,33.05 L34.66,33.79 L33.36,34.63 L32.10,35.57 L30.88,36.60 L29.72,37.73 L28.62,38.96 L27.59,40.27 L26.62,41.67 L25.74,43.16 L24.94,44.72 L24.24,46.36 L23.63,48.07 L23.12,49.84 L22.72,51.68 L22.43,53.57 L22.26,55.51 L22.22,57.49 L22.30,59.50 L22.52,61.55 L22.88,63.61 L23.38,65.68 L24.02,67.76 L24.81,69.83 L25.76,71.88 L26.85,73.90 L28.10,75.88 L29.51,77.82 L31.07,79.69 L32.79,81.48 L34.65,83.19 L36.67,84.80 L38.83,86.30 L41.13,87.67 L43.56,88.91 L46.12,90.00 L48.79,90.92 L51.58,91.67 L54.45,92.24 L57.42,92.61 L60.45,92.77 L63.54,92.72 L66.67,92.45 L69.83,91.96 L72.99,91.23 L76.14,90.26Z"/><path d="M19.79,87.30 L17.58,84.95 L15.54,82.46 L13.69,79.87 L12.04,77.16 L10.58,74.37 L9.34,71.51 L8.30,68.58 L7.48,65.62 L6.87,62.62 L6.48,59.61 L6.31,56.61 L6.35,53.63 L6.61,50.68 L7.08,47.78 L7.74,44.95 L8.61,42.20 L9.66,39.55 L10.90,37.01 L12.31,34.59 L13.87,32.31 L15.58,30.18 L17.43,28.20 L19.39,26.39 L21.46,24.75 L23.63,23.30 L25.86,22.03 L28.16,20.95 L30.50,20.06 L32.86,19.37 L35.24,18.87 L37.60,18.56 L39.95,18.44 L42.26,18.51 L44.51,18.75 L46.70,19.16 L48.81,19.73 L50.83,20.45 L52.74,21.31 L54.54,22.31 L56.22,23.42 L57.77,24.63 L59.18,25.94 L60.45,27.32 L61.57,28.77 L62.55,30.26 L63.37,31.79 L64.05,33.34 L64.59,34.89 L64.59,34.89 L63.75,33.70 L62.82,32.55 L61.79,31.45 L60.68,30.40 L59.48,29.42 L58.19,28.51 L56.83,27.68 L55.40,26.92 L53.89,26.25 L52.32,25.68 L50.69,25.20 L49.01,24.82 L47.28,24.54 L45.50,24.37 L43.69,24.32 L41.84,24.39 L39.97,24.57 L38.09,24.88 L36.19,25.32 L34.29,25.89 L32.40,26.60 L30.53,27.43 L28.68,28.41 L26.86,29.53 L25.08,30.78 L23.36,32.17 L21.70,33.70 L20.12,35.37 L18.62,37.17 L17.21,39.11 L15.92,41.17 L14.74,43.36 L13.69,45.66 L12.78,48.08 L12.02,50.59 L11.43,53.21 L11.01,55.90 L10.76,58.67 L10.71,61.50 L10.86,64.38 L11.21,67.29 L11.77,70.22 L12.55,73.16 L13.55,76.08 L14.77,78.97 L16.22,81.82 L17.90,84.60 L19.79,87.30Z"/></g><g fill="#f2f2f2"><path d="M5.19,32.80 L6.74,29.96 L8.47,27.26 L10.38,24.70 L12.43,22.29 L14.64,20.04 L16.98,17.97 L19.44,16.08 L22.01,14.38 L24.67,12.88 L27.41,11.58 L30.21,10.49 L33.06,9.61 L35.95,8.94 L38.85,8.49 L41.74,8.25 L44.62,8.23 L47.47,8.41 L50.27,8.80 L53.00,9.39 L55.66,10.17 L58.22,11.14 L60.67,12.29 L63.00,13.60 L65.19,15.06 L67.24,16.67 L69.14,18.40 L70.88,20.25 L72.44,22.20 L73.83,24.24 L75.04,26.34 L76.07,28.50 L76.91,30.69 L77.56,32.90 L78.03,35.12 L78.31,37.33 L78.42,39.51 L78.36,41.66 L78.13,43.74 L77.74,45.76 L77.20,47.70 L76.53,49.55 L75.72,51.29 L74.80,52.93 L73.77,54.44 L72.65,55.83 L71.45,57.09 L70.19,58.22 L68.87,59.21 L68.87,59.21 L69.75,58.04 L70.56,56.80 L71.29,55.48 L71.94,54.10 L72.50,52.65 L72.97,51.15 L73.34,49.60 L73.62,48.00 L73.79,46.37 L73.85,44.69 L73.80,43.00 L73.65,41.28 L73.37,39.54 L72.98,37.80 L72.47,36.06 L71.84,34.33 L71.09,32.61 L70.21,30.91 L69.20,29.24 L68.07,27.61 L66.82,26.03 L65.44,24.51 L63.94,23.05 L62.32,21.66 L60.58,20.36 L58.72,19.15 L56.75,18.05 L54.68,17.06 L52.50,16.19 L50.23,15.45 L47.86,14.86 L45.42,14.41 L42.90,14.13 L40.33,14.01 L37.70,14.07 L35.03,14.31 L32.34,14.74 L29.63,15.36 L26.92,16.19 L24.23,17.21 L21.57,18.45 L18.96,19.89 L16.40,21.54 L13.93,23.39 L11.56,25.45 L9.30,27.71 L7.17,30.16 L5.19,32.80Z"/><path d="M52.51,2.07 L55.69,2.67 L58.80,3.48 L61.82,4.50 L64.75,5.71 L67.56,7.11 L70.26,8.70 L72.81,10.45 L75.22,12.37 L77.47,14.44 L79.55,16.64 L81.46,18.97 L83.18,21.41 L84.70,23.95 L86.03,26.56 L87.15,29.25 L88.07,31.98 L88.77,34.74 L89.27,37.52 L89.55,40.31 L89.63,43.07 L89.50,45.81 L89.17,48.49 L88.64,51.11 L87.92,53.65 L87.03,56.10 L85.97,58.44 L84.74,60.66 L83.37,62.76 L81.87,64.71 L80.24,66.50 L78.51,68.15 L76.68,69.62 L74.78,70.93 L72.81,72.06 L70.80,73.01 L68.76,73.79 L66.70,74.39 L64.64,74.82 L62.60,75.07 L60.59,75.16 L58.63,75.09 L56.72,74.86 L54.88,74.49 L53.12,73.98 L51.45,73.34 L49.88,72.59 L48.42,71.74 L47.08,70.80 L47.08,70.80 L48.46,71.27 L49.89,71.65 L51.37,71.94 L52.88,72.13 L54.43,72.22 L56.00,72.20 L57.59,72.08 L59.20,71.84 L60.81,71.50 L62.42,71.04 L64.02,70.48 L65.60,69.79 L67.17,69.00 L68.70,68.09 L70.20,67.06 L71.66,65.93 L73.06,64.68 L74.40,63.32 L75.68,61.85 L76.88,60.27 L77.99,58.59 L79.02,56.81 L79.94,54.93 L80.76,52.96 L81.46,50.90 L82.03,48.76 L82.47,46.55 L82.78,44.27 L82.93,41.93 L82.93,39.54 L82.76,37.11 L82.43,34.65 L81.93,32.17 L81.24,29.68 L80.37,27.20 L79.32,24.74 L78.08,22.31 L76.65,19.92 L75.03,17.60 L73.22,15.36 L71.22,13.21 L69.04,11.17 L66.69,9.25 L64.16,7.48 L61.47,5.86 L58.62,4.40 L55.63,3.14 L52.51,2.07Z"/><path d="M96.36,37.58 L96.77,40.78 L96.96,43.99 L96.93,47.18 L96.68,50.34 L96.22,53.45 L95.54,56.50 L94.66,59.48 L93.58,62.36 L92.31,65.14 L90.86,67.80 L89.23,70.33 L87.44,72.72 L85.50,74.95 L83.42,77.02 L81.22,78.92 L78.90,80.64 L76.49,82.16 L74.00,83.49 L71.44,84.62 L68.83,85.55 L66.19,86.27 L63.54,86.78 L60.88,87.09 L58.25,87.20 L55.64,87.10 L53.09,86.82 L50.59,86.34 L48.18,85.68 L45.86,84.85 L43.65,83.86 L41.55,82.72 L39.58,81.44 L37.75,80.03 L36.07,78.51 L34.54,76.89 L33.17,75.19 L31.96,73.42 L30.92,71.60 L30.05,69.73 L29.34,67.85 L28.81,65.96 L28.43,64.07 L28.22,62.21 L28.16,60.38 L28.25,58.60 L28.48,56.87 L28.84,55.22 L29.32,53.65 L29.32,53.65 L29.29,55.11 L29.37,56.59 L29.55,58.08 L29.84,59.58 L30.24,61.08 L30.74,62.57 L31.35,64.04 L32.07,65.50 L32.89,66.92 L33.82,68.31 L34.86,69.66 L36.00,70.96 L37.24,72.20 L38.58,73.38 L40.01,74.49 L41.54,75.52 L43.17,76.47 L44.87,77.32 L46.67,78.08 L48.54,78.74 L50.48,79.28 L52.49,79.70 L54.56,80.00 L56.69,80.17 L58.86,80.20 L61.07,80.08 L63.32,79.82 L65.58,79.40 L67.85,78.82 L70.12,78.08 L72.39,77.18 L74.62,76.10 L76.83,74.85 L78.98,73.43 L81.07,71.84 L83.09,70.08 L85.02,68.15 L86.84,66.05 L88.54,63.79 L90.12,61.38 L91.55,58.81 L92.81,56.11 L93.91,53.28 L94.82,50.33 L95.53,47.27 L96.03,44.11 L96.31,40.88 L96.36,37.58Z"/><path d="M76.14,90.26 L73.22,91.64 L70.23,92.81 L67.18,93.76 L64.10,94.50 L61.00,95.02 L57.89,95.32 L54.79,95.40 L51.71,95.27 L48.68,94.92 L45.70,94.36 L42.79,93.59 L39.96,92.63 L37.24,91.47 L34.63,90.14 L32.14,88.63 L29.80,86.96 L27.60,85.13 L25.57,83.17 L23.70,81.09 L22.01,78.90 L20.51,76.61 L19.20,74.24 L18.09,71.81 L17.17,69.34 L16.46,66.83 L15.94,64.31 L15.62,61.79 L15.50,59.30 L15.58,56.83 L15.83,54.42 L16.27,52.08 L16.88,49.81 L17.66,47.63 L18.58,45.56 L19.65,43.61 L20.84,41.78 L22.15,40.08 L23.57,38.53 L25.07,37.12 L26.64,35.87 L28.27,34.78 L29.95,33.84 L31.66,33.06 L33.38,32.43 L35.10,31.97 L36.81,31.65 L38.50,31.48 L40.14,31.46 L40.14,31.46 L38.74,31.88 L37.36,32.42 L36.00,33.05 L34.66,33.79 L33.36,34.63 L32.10,35.57 L30.88,36.60 L29.72,37.73 L28.62,38.96 L27.59,40.27 L26.62,41.67 L25.74,43.16 L24.94,44.72 L24.24,46.36 L23.63,48.07 L23.12,49.84 L22.72,51.68 L22.43,53.57 L22.26,55.51 L22.22,57.49 L22.30,59.50 L22.52,61.55 L22.88,63.61 L23.38,65.68 L24.02,67.76 L24.81,69.83 L25.76,71.88 L26.85,73.90 L28.10,75.88 L29.51,77.82 L31.07,79.69 L32.79,81.48 L34.65,83.19 L36.67,84.80 L38.83,86.30 L41.13,87.67 L43.56,88.91 L46.12,90.00 L48.79,90.92 L51.58,91.67 L54.45,92.24 L57.42,92.61 L60.45,92.77 L63.54,92.72 L66.67,92.45 L69.83,91.96 L72.99,91.23 L76.14,90.26Z"/><path d="M19.79,87.30 L17.58,84.95 L15.54,82.46 L13.69,79.87 L12.04,77.16 L10.58,74.37 L9.34,71.51 L8.30,68.58 L7.48,65.62 L6.87,62.62 L6.48,59.61 L6.31,56.61 L6.35,53.63 L6.61,50.68 L7.08,47.78 L7.74,44.95 L8.61,42.20 L9.66,39.55 L10.90,37.01 L12.31,34.59 L13.87,32.31 L15.58,30.18 L17.43,28.20 L19.39,26.39 L21.46,24.75 L23.63,23.30 L25.86,22.03 L28.16,20.95 L30.50,20.06 L32.86,19.37 L35.24,18.87 L37.60,18.56 L39.95,18.44 L42.26,18.51 L44.51,18.75 L46.70,19.16 L48.81,19.73 L50.83,20.45 L52.74,21.31 L54.54,22.31 L56.22,23.42 L57.77,24.63 L59.18,25.94 L60.45,27.32 L61.57,28.77 L62.55,30.26 L63.37,31.79 L64.05,33.34 L64.59,34.89 L64.59,34.89 L63.75,33.70 L62.82,32.55 L61.79,31.45 L60.68,30.40 L59.48,29.42 L58.19,28.51 L56.83,27.68 L55.40,26.92 L53.89,26.25 L52.32,25.68 L50.69,25.20 L49.01,24.82 L47.28,24.54 L45.50,24.37 L43.69,24.32 L41.84,24.39 L39.97,24.57 L38.09,24.88 L36.19,25.32 L34.29,25.89 L32.40,26.60 L30.53,27.43 L28.68,28.41 L26.86,29.53 L25.08,30.78 L23.36,32.17 L21.70,33.70 L20.12,35.37 L18.62,37.17 L17.21,39.11 L15.92,41.17 L14.74,43.36 L13.69,45.66 L12.78,48.08 L12.02,50.59 L11.43,53.21 L11.01,55.90 L10.76,58.67 L10.71,61.50 L10.86,64.38 L11.21,67.29 L11.77,70.22 L12.55,73.16 L13.55,76.08 L14.77,78.97 L16.22,81.82 L17.90,84.60 L19.79,87.30Z"/></g></svg></div>
<div class="abs pms" style="left:161px;top:10px;color:#333;font-size:13px;line-height:13px;text-shadow:none">Property<br>Management<br>Software</div>
</div>
<div id="copy">&copy; 2013</div>
</body></html>
